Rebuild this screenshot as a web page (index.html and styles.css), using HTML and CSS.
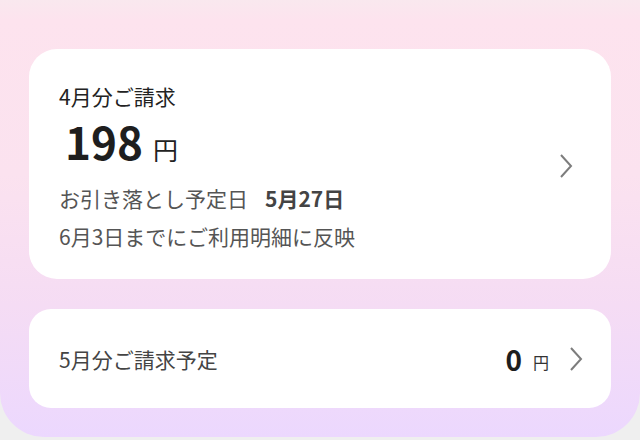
FILE: index.html
```html
<!DOCTYPE html>
<html lang="ja">
<head>
<meta charset="utf-8">
<link rel="stylesheet" href="styles.css">
</head>
<body>
<div class="panel">
  <div class="card main">
    <div class="info">
      <div class="title">4月分ご請求</div>
      <div class="amount"><span class="num">198</span><span class="yen">円</span></div>
      <div class="line first">お引き落とし予定日<span class="date">5月27日</span></div>
      <div class="line second">6月3日までにご利用明細に反映</div>
    </div>
    <svg class="chev" width="14" height="26" viewBox="0 0 14 26"><path d="M2 2 L12 13 L2 24" fill="none" stroke="#7d7d7d" stroke-width="2"/></svg>
  </div>
  <div class="card next">
    <div class="label">5月分ご請求予定</div>
    <div class="right">
      <span class="num2">0</span><span class="yen2">円</span>
      <svg class="chev2" width="14" height="26" viewBox="0 0 14 26"><path d="M2 2 L12 13 L2 24" fill="none" stroke="#7d7d7d" stroke-width="2"/></svg>
    </div>
  </div>
</div>
</body>
</html>
```
FILE: styles.css
```css
html, body {
  margin: 0;
  padding: 0;
}
body {
  background: #efefef;
  width: 640px;
  height: 440px;
  overflow: hidden;
  font-family: "Noto Sans CJK JP", "Noto Sans", sans-serif;
}
.panel {
  height: 437px;
  box-sizing: border-box;
  padding: 49px 29px 0;
  border-radius: 0 0 44px 44px;
  background: linear-gradient(#f9e8ee 0px, #fde3ee 20px, #fbe2ef 40%, #f5dcf4 70%, #ecd8fe 100%);
}
.card {
  background: #fff;
  display: flex;
  align-items: center;
  box-sizing: border-box;
}
.main {
  height: 230px;
  border-radius: 28px;
  padding: 32px 38px 0 30px;
  align-items: flex-start;
  justify-content: space-between;
}
.info {
  display: flex;
  flex-direction: column;
}
.title {
  font-size: 21px;
  color: #222;
  line-height: 30px;
}
.amount {
  display: flex;
  align-items: baseline;
  padding-left: 6px;
  line-height: 60px;
  height: 60px;
}
.num {
  font-size: 44px;
  font-weight: 700;
  color: #1e1e1e;
}
.yen {
  font-size: 25px;
  color: #222;
  margin-left: 10px;
}
.line {
  font-size: 21px;
  color: #555;
  line-height: 30px;
}
.first {
  margin-top: 12px;
}
.second {
  margin-top: 8px;
}
.date {
  font-weight: 700;
  color: #444;
  margin-left: 17px;
}
.chev {
  margin-top: 72px;
}
.next {
  height: 99px;
  margin-top: 30px;
  border-radius: 22px;
  padding: 0 28px 0 30px;
  justify-content: space-between;
}
.label {
  font-size: 21px;
  color: #444;
}
.right {
  display: flex;
  align-items: center;
}
.num2 {
  font-size: 28px;
  font-weight: 700;
  color: #1e1e1e;
}
.yen2 {
  font-size: 16px;
  color: #333;
  margin-left: 11px;
  margin-top: 6px;
}
.chev2 {
  margin-left: 20px;
}
```
